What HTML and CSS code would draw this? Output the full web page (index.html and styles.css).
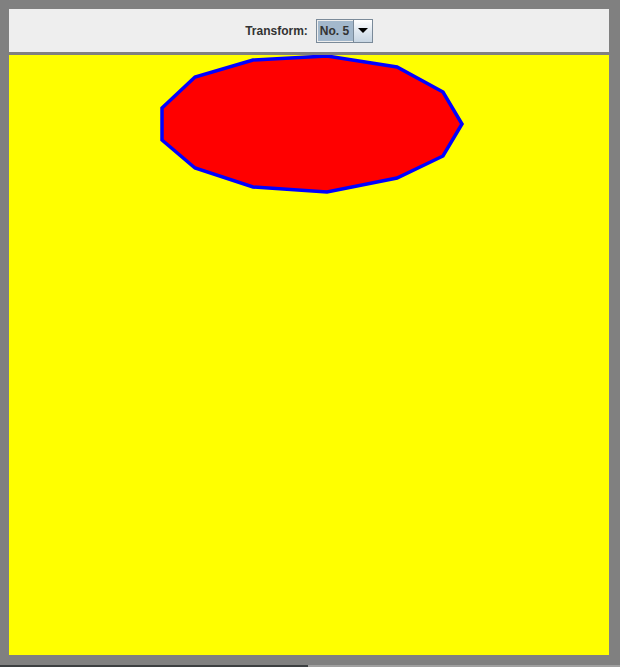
FILE: index.html
```html
<!DOCTYPE html>
<html>
<head>
<meta charset="utf-8">
<link rel="stylesheet" href="styles.css">
</head>
<body>
<div class="frame">
  <div class="panel">
    <div class="toolbar">
      <span class="label">Transform:</span>
      <div class="combo">
        <span class="combo-value">No. 5</span>
        <span class="combo-arrow"><svg width="10" height="6" viewBox="0 0 10 6"><polygon points="0,0 10,0 5,5" fill="#000"/></svg></span>
      </div>
    </div>
    <div class="canvas">
      <svg width="600" height="600" viewBox="9 55 600 600">
        <polygon class="shape" points="327,56 397,67 443,92 462,124 443,156 397,178 327,192 253,187 195,168 162,140 162,108 195,77 253,60"/>
      </svg>
    </div>
  </div>
</div>
<div class="bottom">
  <div class="bottom-left"></div>
  <div class="bottom-right"></div>
</div>
</body>
</html>
```

FILE: styles.css
```css
html, body {
  margin: 0;
  padding: 0;
  background: #808080;
  width: 620px;
  height: 667px;
  overflow: hidden;
}
.frame {
  padding: 9px 11px 10px 9px;
  height: 646px;
}
.panel {
  width: 600px;
  display: flex;
  flex-direction: column;
}
.toolbar {
  background: #eeeeee;
  display: flex;
  align-items: center;
  justify-content: center;
  gap: 8px;
  box-sizing: border-box;
  border-bottom: 3px solid #808080;
  height: 46px;
}
.label {
  font-family: "Liberation Sans", Arial, sans-serif;
  font-weight: bold;
  font-size: 12px;
  color: #333333;
}
.combo {
  display: flex;
  height: 24px;
  width: 57px;
  box-sizing: border-box;
  border: 1px solid #7a8a99;
  background: #eeeeee;
}
.combo-value {
  flex: 1;
  display: flex;
  align-items: center;
  padding-left: 2px;
  margin: 1px 0 1px 1px;
  background: #a3b8cc;
  font-family: "Liberation Sans", Arial, sans-serif;
  font-weight: bold;
  font-size: 12px;
  color: #333333;
}
.combo-arrow {
  width: 18px;
  border-left: 1px solid #7a8a99;
  background: linear-gradient(#ffffff, #dde6ef 55%, #c8d6e3);
  display: flex;
  align-items: center;
  justify-content: center;
}
.canvas {
  width: 600px;
  height: 600px;
  background: #ffff00;
  overflow: hidden;
}
.canvas svg {
  display: block;
}
.shape {
  fill: #ff0000;
  stroke: #0000ff;
  stroke-width: 3.5;
  stroke-linejoin: miter;
}
.bottom {
  display: flex;
  height: 2px;
}
.bottom-left {
  width: 308px;
  background: #3c3f41;
}
.bottom-right {
  flex: 1;
  background: #a0a0a0;
}
```
